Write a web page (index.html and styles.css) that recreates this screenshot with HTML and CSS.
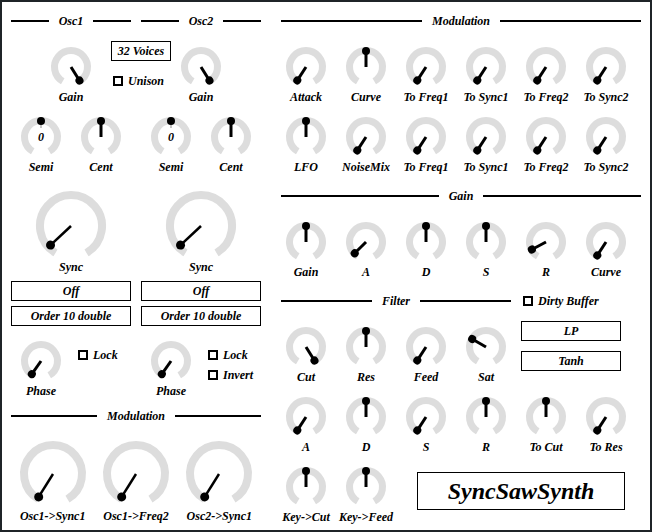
FILE: index.html
```
<!DOCTYPE html>
<html>
<head>
<meta charset="utf-8">
<link rel="stylesheet" href="styles.css">
</head>
<body>
<div class="frame">
  <div class="left">
    <div class="osc-heads">
      <div class="header col"><span>Osc1</span></div>
      <div class="header col"><span>Osc2</span></div>
    </div>
    <div class="row1">
      <div class="kc w60"><svg class="k" viewBox="0 0 40 40"><path class="arc" d="M11.75 34.29A16.5 16.5 0 1 1 28.25 34.29"/><g class="ptr" transform="rotate(148 20 20)"><line x1="20" y1="20" x2="20" y2="4"/><circle cx="20" cy="4" r="4"/></g></svg><div class="lbl">Gain</div></div>
      <div class="mid">
        <div class="box voices">32 Voices</div>
        <div class="chk unison"><i class="cb"></i><span>Unison</span></div>
      </div>
      <div class="kc w60"><svg class="k" viewBox="0 0 40 40"><path class="arc" d="M11.75 34.29A16.5 16.5 0 1 1 28.25 34.29"/><g class="ptr" transform="rotate(148 20 20)"><line x1="20" y1="20" x2="20" y2="4"/><circle cx="20" cy="4" r="4"/></g></svg><div class="lbl">Gain</div></div>
    </div>
    <div class="row2">
      <div class="pair">
        <div class="kc w60"><svg class="k" viewBox="0 0 40 40"><path class="arc" d="M11.75 34.29A16.5 16.5 0 1 1 28.25 34.29"/><line class="tick" x1="20" y1="4" x2="20" y2="11"/><circle class="dot" cx="20" cy="4" r="4"/><text class="num" x="20" y="24">0</text></svg><div class="lbl">Semi</div></div>
        <div class="kc w60"><svg class="k" viewBox="0 0 40 40"><path class="arc" d="M11.75 34.29A16.5 16.5 0 1 1 28.25 34.29"/><g class="ptr"><line x1="20" y1="20" x2="20" y2="4"/><circle cx="20" cy="4" r="4"/></g></svg><div class="lbl">Cent</div></div>
      </div>
      <div class="pair">
        <div class="kc w60"><svg class="k" viewBox="0 0 40 40"><path class="arc" d="M11.75 34.29A16.5 16.5 0 1 1 28.25 34.29"/><line class="tick" x1="20" y1="4" x2="20" y2="11"/><circle class="dot" cx="20" cy="4" r="4"/><text class="num" x="20" y="24">0</text></svg><div class="lbl">Semi</div></div>
        <div class="kc w60"><svg class="k" viewBox="0 0 40 40"><path class="arc" d="M11.75 34.29A16.5 16.5 0 1 1 28.25 34.29"/><g class="ptr"><line x1="20" y1="20" x2="20" y2="4"/><circle cx="20" cy="4" r="4"/></g></svg><div class="lbl">Cent</div></div>
      </div>
    </div>
    <div class="osc-cols">
      <div class="col">
        <div class="kc big"><svg class="kb" viewBox="0 0 70 70"><path class="arc" d="M19.5 61.85A31 31 0 1 1 50.5 61.85"/><g class="ptr" transform="rotate(-133 35 35)"><line x1="35" y1="35" x2="35" y2="7"/><circle cx="35" cy="7" r="4.5"/></g></svg><div class="lbl">Sync</div></div>
        <div class="box sel">Off</div>
        <div class="box sel2">Order 10 double</div>
        <div class="phase-row">
          <div class="kc w60"><svg class="k" viewBox="0 0 40 40"><path class="arc" d="M11.75 34.29A16.5 16.5 0 1 1 28.25 34.29"/><g class="ptr" transform="rotate(-145 20 20)"><line x1="20" y1="20" x2="20" y2="4"/><circle cx="20" cy="4" r="4"/></g></svg><div class="lbl">Phase</div></div>
          <div class="chks">
            <div class="chk"><i class="cb"></i><span>Lock</span></div>
          </div>
        </div>
      </div>
      <div class="col">
        <div class="kc big"><svg class="kb" viewBox="0 0 70 70"><path class="arc" d="M19.5 61.85A31 31 0 1 1 50.5 61.85"/><g class="ptr" transform="rotate(-133 35 35)"><line x1="35" y1="35" x2="35" y2="7"/><circle cx="35" cy="7" r="4.5"/></g></svg><div class="lbl">Sync</div></div>
        <div class="box sel">Off</div>
        <div class="box sel2">Order 10 double</div>
        <div class="phase-row">
          <div class="kc w60"><svg class="k" viewBox="0 0 40 40"><path class="arc" d="M11.75 34.29A16.5 16.5 0 1 1 28.25 34.29"/><g class="ptr" transform="rotate(-145 20 20)"><line x1="20" y1="20" x2="20" y2="4"/><circle cx="20" cy="4" r="4"/></g></svg><div class="lbl">Phase</div></div>
          <div class="chks">
            <div class="chk"><i class="cb"></i><span>Lock</span></div>
            <div class="chk"><i class="cb"></i><span>Invert</span></div>
          </div>
        </div>
      </div>
    </div>
    <div class="header modl"><span>Modulation</span></div>
    <div class="bigrow">
      <div class="kc b85"><svg class="kb2" viewBox="0 0 66 66"><path class="arc" d="M18.5 58.11A29 29 0 1 1 47.5 58.11"/><g class="ptr" transform="rotate(-148 33 33)"><line x1="33" y1="33" x2="33" y2="6"/><circle cx="33" cy="6" r="4.5"/></g></svg><div class="lbl">Osc1-&gt;Sync1</div></div>
      <div class="kc b85"><svg class="kb2" viewBox="0 0 66 66"><path class="arc" d="M18.5 58.11A29 29 0 1 1 47.5 58.11"/><g class="ptr" transform="rotate(-148 33 33)"><line x1="33" y1="33" x2="33" y2="6"/><circle cx="33" cy="6" r="4.5"/></g></svg><div class="lbl">Osc1-&gt;Freq2</div></div>
      <div class="kc b85"><svg class="kb2" viewBox="0 0 66 66"><path class="arc" d="M18.5 58.11A29 29 0 1 1 47.5 58.11"/><g class="ptr" transform="rotate(-148 33 33)"><line x1="33" y1="33" x2="33" y2="6"/><circle cx="33" cy="6" r="4.5"/></g></svg><div class="lbl">Osc2-&gt;Sync1</div></div>
    </div>
  </div>

  <div class="right">
    <div class="header"><span>Modulation</span></div>
    <div class="kgrid gmod">
      <div class="kc"><svg class="k" viewBox="0 0 40 40"><path class="arc" d="M11.75 34.29A16.5 16.5 0 1 1 28.25 34.29"/><g class="ptr" transform="rotate(-147 20 20)"><line x1="20" y1="20" x2="20" y2="4"/><circle cx="20" cy="4" r="4"/></g></svg><div class="lbl">Attack</div></div>
      <div class="kc"><svg class="k" viewBox="0 0 40 40"><path class="arc" d="M11.75 34.29A16.5 16.5 0 1 1 28.25 34.29"/><g class="ptr"><line x1="20" y1="20" x2="20" y2="4"/><circle cx="20" cy="4" r="4"/></g></svg><div class="lbl">Curve</div></div>
      <div class="kc"><svg class="k" viewBox="0 0 40 40"><path class="arc" d="M11.75 34.29A16.5 16.5 0 1 1 28.25 34.29"/><g class="ptr" transform="rotate(-147 20 20)"><line x1="20" y1="20" x2="20" y2="4"/><circle cx="20" cy="4" r="4"/></g></svg><div class="lbl">To Freq1</div></div>
      <div class="kc"><svg class="k" viewBox="0 0 40 40"><path class="arc" d="M11.75 34.29A16.5 16.5 0 1 1 28.25 34.29"/><g class="ptr" transform="rotate(-147 20 20)"><line x1="20" y1="20" x2="20" y2="4"/><circle cx="20" cy="4" r="4"/></g></svg><div class="lbl">To Sync1</div></div>
      <div class="kc"><svg class="k" viewBox="0 0 40 40"><path class="arc" d="M11.75 34.29A16.5 16.5 0 1 1 28.25 34.29"/><g class="ptr" transform="rotate(-147 20 20)"><line x1="20" y1="20" x2="20" y2="4"/><circle cx="20" cy="4" r="4"/></g></svg><div class="lbl">To Freq2</div></div>
      <div class="kc"><svg class="k" viewBox="0 0 40 40"><path class="arc" d="M11.75 34.29A16.5 16.5 0 1 1 28.25 34.29"/><g class="ptr" transform="rotate(-147 20 20)"><line x1="20" y1="20" x2="20" y2="4"/><circle cx="20" cy="4" r="4"/></g></svg><div class="lbl">To Sync2</div></div>
      <div class="kc"><svg class="k" viewBox="0 0 40 40"><path class="arc" d="M11.75 34.29A16.5 16.5 0 1 1 28.25 34.29"/><g class="ptr"><line x1="20" y1="20" x2="20" y2="4"/><circle cx="20" cy="4" r="4"/></g></svg><div class="lbl">LFO</div></div>
      <div class="kc"><svg class="k" viewBox="0 0 40 40"><path class="arc" d="M11.75 34.29A16.5 16.5 0 1 1 28.25 34.29"/><g class="ptr" transform="rotate(-147 20 20)"><line x1="20" y1="20" x2="20" y2="4"/><circle cx="20" cy="4" r="4"/></g></svg><div class="lbl">NoiseMix</div></div>
      <div class="kc"><svg class="k" viewBox="0 0 40 40"><path class="arc" d="M11.75 34.29A16.5 16.5 0 1 1 28.25 34.29"/><g class="ptr" transform="rotate(-147 20 20)"><line x1="20" y1="20" x2="20" y2="4"/><circle cx="20" cy="4" r="4"/></g></svg><div class="lbl">To Freq1</div></div>
      <div class="kc"><svg class="k" viewBox="0 0 40 40"><path class="arc" d="M11.75 34.29A16.5 16.5 0 1 1 28.25 34.29"/><g class="ptr" transform="rotate(-147 20 20)"><line x1="20" y1="20" x2="20" y2="4"/><circle cx="20" cy="4" r="4"/></g></svg><div class="lbl">To Sync1</div></div>
      <div class="kc"><svg class="k" viewBox="0 0 40 40"><path class="arc" d="M11.75 34.29A16.5 16.5 0 1 1 28.25 34.29"/><g class="ptr" transform="rotate(-147 20 20)"><line x1="20" y1="20" x2="20" y2="4"/><circle cx="20" cy="4" r="4"/></g></svg><div class="lbl">To Freq2</div></div>
      <div class="kc"><svg class="k" viewBox="0 0 40 40"><path class="arc" d="M11.75 34.29A16.5 16.5 0 1 1 28.25 34.29"/><g class="ptr" transform="rotate(-147 20 20)"><line x1="20" y1="20" x2="20" y2="4"/><circle cx="20" cy="4" r="4"/></g></svg><div class="lbl">To Sync2</div></div>
    </div>
    <div class="header gainh"><span>Gain</span></div>
    <div class="kgrid ggain">
      <div class="kc"><svg class="k" viewBox="0 0 40 40"><path class="arc" d="M11.75 34.29A16.5 16.5 0 1 1 28.25 34.29"/><g class="ptr"><line x1="20" y1="20" x2="20" y2="4"/><circle cx="20" cy="4" r="4"/></g></svg><div class="lbl">Gain</div></div>
      <div class="kc"><svg class="k" viewBox="0 0 40 40"><path class="arc" d="M11.75 34.29A16.5 16.5 0 1 1 28.25 34.29"/><g class="ptr" transform="rotate(-135 20 20)"><line x1="20" y1="20" x2="20" y2="4"/><circle cx="20" cy="4" r="4"/></g></svg><div class="lbl">A</div></div>
      <div class="kc"><svg class="k" viewBox="0 0 40 40"><path class="arc" d="M11.75 34.29A16.5 16.5 0 1 1 28.25 34.29"/><g class="ptr"><line x1="20" y1="20" x2="20" y2="4"/><circle cx="20" cy="4" r="4"/></g></svg><div class="lbl">D</div></div>
      <div class="kc"><svg class="k" viewBox="0 0 40 40"><path class="arc" d="M11.75 34.29A16.5 16.5 0 1 1 28.25 34.29"/><g class="ptr"><line x1="20" y1="20" x2="20" y2="4"/><circle cx="20" cy="4" r="4"/></g></svg><div class="lbl">S</div></div>
      <div class="kc"><svg class="k" viewBox="0 0 40 40"><path class="arc" d="M11.75 34.29A16.5 16.5 0 1 1 28.25 34.29"/><g class="ptr" transform="rotate(-118 20 20)"><line x1="20" y1="20" x2="20" y2="4"/><circle cx="20" cy="4" r="4"/></g></svg><div class="lbl">R</div></div>
      <div class="kc"><svg class="k" viewBox="0 0 40 40"><path class="arc" d="M11.75 34.29A16.5 16.5 0 1 1 28.25 34.29"/><g class="ptr" transform="rotate(-147 20 20)"><line x1="20" y1="20" x2="20" y2="4"/><circle cx="20" cy="4" r="4"/></g></svg><div class="lbl">Curve</div></div>
    </div>
    <div class="fgrid">
      <div class="header fh"><span>Filter</span></div>
      <div class="chk dirty"><i class="cb"></i><span>Dirty Buffer</span></div>
      <div class="kc"><svg class="k" viewBox="0 0 40 40"><path class="arc" d="M11.75 34.29A16.5 16.5 0 1 1 28.25 34.29"/><g class="ptr" transform="rotate(148 20 20)"><line x1="20" y1="20" x2="20" y2="4"/><circle cx="20" cy="4" r="4"/></g></svg><div class="lbl">Cut</div></div>
      <div class="kc"><svg class="k" viewBox="0 0 40 40"><path class="arc" d="M11.75 34.29A16.5 16.5 0 1 1 28.25 34.29"/><g class="ptr"><line x1="20" y1="20" x2="20" y2="4"/><circle cx="20" cy="4" r="4"/></g></svg><div class="lbl">Res</div></div>
      <div class="kc"><svg class="k" viewBox="0 0 40 40"><path class="arc" d="M11.75 34.29A16.5 16.5 0 1 1 28.25 34.29"/><g class="ptr" transform="rotate(-147 20 20)"><line x1="20" y1="20" x2="20" y2="4"/><circle cx="20" cy="4" r="4"/></g></svg><div class="lbl">Feed</div></div>
      <div class="kc"><svg class="k" viewBox="0 0 40 40"><path class="arc" d="M11.75 34.29A16.5 16.5 0 1 1 28.25 34.29"/><g class="ptr" transform="rotate(-60 20 20)"><line x1="20" y1="20" x2="20" y2="4"/><circle cx="20" cy="4" r="4"/></g></svg><div class="lbl">Sat</div></div>
      <div class="modes">
        <div class="box mode">LP</div>
        <div class="box mode">Tanh</div>
      </div>
      <div class="kc"><svg class="k" viewBox="0 0 40 40"><path class="arc" d="M11.75 34.29A16.5 16.5 0 1 1 28.25 34.29"/><g class="ptr" transform="rotate(-147 20 20)"><line x1="20" y1="20" x2="20" y2="4"/><circle cx="20" cy="4" r="4"/></g></svg><div class="lbl">A</div></div>
      <div class="kc"><svg class="k" viewBox="0 0 40 40"><path class="arc" d="M11.75 34.29A16.5 16.5 0 1 1 28.25 34.29"/><g class="ptr"><line x1="20" y1="20" x2="20" y2="4"/><circle cx="20" cy="4" r="4"/></g></svg><div class="lbl">D</div></div>
      <div class="kc"><svg class="k" viewBox="0 0 40 40"><path class="arc" d="M11.75 34.29A16.5 16.5 0 1 1 28.25 34.29"/><g class="ptr" transform="rotate(-147 20 20)"><line x1="20" y1="20" x2="20" y2="4"/><circle cx="20" cy="4" r="4"/></g></svg><div class="lbl">S</div></div>
      <div class="kc"><svg class="k" viewBox="0 0 40 40"><path class="arc" d="M11.75 34.29A16.5 16.5 0 1 1 28.25 34.29"/><g class="ptr"><line x1="20" y1="20" x2="20" y2="4"/><circle cx="20" cy="4" r="4"/></g></svg><div class="lbl">R</div></div>
      <div class="kc"><svg class="k" viewBox="0 0 40 40"><path class="arc" d="M11.75 34.29A16.5 16.5 0 1 1 28.25 34.29"/><g class="ptr"><line x1="20" y1="20" x2="20" y2="4"/><circle cx="20" cy="4" r="4"/></g></svg><div class="lbl">To Cut</div></div>
      <div class="kc"><svg class="k" viewBox="0 0 40 40"><path class="arc" d="M11.75 34.29A16.5 16.5 0 1 1 28.25 34.29"/><g class="ptr" transform="rotate(-147 20 20)"><line x1="20" y1="20" x2="20" y2="4"/><circle cx="20" cy="4" r="4"/></g></svg><div class="lbl">To Res</div></div>
      <div class="kc"><svg class="k" viewBox="0 0 40 40"><path class="arc" d="M11.75 34.29A16.5 16.5 0 1 1 28.25 34.29"/><g class="ptr"><line x1="20" y1="20" x2="20" y2="4"/><circle cx="20" cy="4" r="4"/></g></svg><div class="lbl">Key-&gt;Cut</div></div>
      <div class="kc"><svg class="k" viewBox="0 0 40 40"><path class="arc" d="M11.75 34.29A16.5 16.5 0 1 1 28.25 34.29"/><g class="ptr"><line x1="20" y1="20" x2="20" y2="4"/><circle cx="20" cy="4" r="4"/></g></svg><div class="lbl">Key-&gt;Feed</div></div>
      <div class="title">SyncSawSynth</div>
    </div>
  </div>
</div>
</body>
</html>
```
FILE: styles.css
```
* { box-sizing: border-box; }
html, body { margin: 0; padding: 0; background: #fff; }
body {
  font-family: "Liberation Serif", "Times New Roman", serif;
  font-weight: bold;
  font-style: italic;
  font-size: 12px;
  color: #000;
}
.frame {
  width: 652px;
  height: 532px;
  border: 2px solid #1f2428;
  padding: 9px 9px 0 9px;
  display: flex;
  gap: 20px;
  overflow: hidden;
}
.left { width: 250px; display: flex; flex-direction: column; }
.right { width: 360px; display: flex; flex-direction: column; }

.header { height: 20px; display: flex; align-items: center; }
.header::before, .header::after { content: ""; flex: 1; height: 2px; background: #000; }
.header span { padding: 0 10px; line-height: 20px; white-space: nowrap; }

.osc-heads { display: flex; gap: 10px; }
.osc-heads .col { width: 120px; }

/* knob cells */
.kc { display: flex; flex-direction: column; align-items: center; width: 50px; }
.kc.w60 { width: 60px; }
.kc .lbl { line-height: 20px; white-space: nowrap; }
.k { width: 40px; height: 40px; display: block; overflow: visible; }
.kb { width: 70px; height: 70px; display: block; overflow: visible; }
.kb2 { width: 66px; height: 66px; display: block; overflow: visible; }
.arc { fill: none; stroke: #dddddd; stroke-width: 7; }
.kb .arc, .kb2 .arc { stroke-width: 8; }
.ptr line { stroke: #000; stroke-width: 3; }
.kb .ptr line, .kb2 .ptr line { stroke-width: 2.5; }
.ptr circle, .dot { fill: #000; }
.tick { stroke: #c4c4c4; stroke-width: 2; }
.num {
  font-family: "Liberation Serif", serif;
  font-weight: bold;
  font-style: italic;
  font-size: 12px;
  text-anchor: middle;
  fill: #000;
}
.kc.big { width: 120px; }
.kc.big .lbl, .kc.b85 .lbl { line-height: 12px; }
.kc.b85 { width: 85px; }
.kc.b85 .lbl { margin-top: 3px; }

.row1 { display: flex; padding-left: 30px; margin-top: 16px; }
.mid { width: 60px; margin-left: 10px; margin-top: -6px; display: flex; flex-direction: column; }
.box {
  border: 1px solid #000;
  height: 20px;
  line-height: 18px;
  text-align: center;
  white-space: nowrap;
}
.voices { width: 60px; }
.chk { display: flex; align-items: center; gap: 5px; height: 20px; white-space: nowrap; }
.cb { display: block; width: 10px; height: 10px; border: 2px solid #000; flex: none; }
.unison { margin-top: 10px; padding-left: 2px; }

.row2 { display: flex; gap: 10px; margin-top: 10px; }
.pair { display: flex; width: 120px; }

.osc-cols { display: flex; gap: 10px; margin-top: 14px; }
.osc-cols .col { width: 120px; display: flex; flex-direction: column; }
.sel { margin-top: 8px; }
.sel2 { margin-top: 5px; }
.phase-row { display: flex; margin-top: 15px; }
.chks { margin-left: 7px; margin-top: 4px; display: flex; flex-direction: column; }

.modl { margin-top: 5px; }
.bigrow { display: flex; margin-top: 15px; }

.kgrid {
  display: grid;
  grid-template-columns: repeat(6, 50px);
  column-gap: 10px;
  row-gap: 10px;
  margin-top: 16px;
}
.gainh { margin-top: 9px; }
.fgrid {
  display: grid;
  grid-template-columns: repeat(6, 50px);
  grid-template-rows: 26px 60px 60px 60px;
  column-gap: 10px;
  row-gap: 10px;
  margin-top: 9px;
}
.fh { grid-column: 1 / span 4; }
.dirty { grid-column: 5 / span 2; padding-left: 2px; }
.modes { grid-column: 5 / span 2; margin-top: -6px; display: flex; flex-direction: column; gap: 10px; }
.mode { width: 100px; }
.title {
  grid-column: 3 / span 4;
  margin: 5px 6px 0 16px;
  height: 38px;
  border: 1px solid #000;
  display: flex;
  align-items: center;
  justify-content: center;
  font-size: 24px;
}
```
